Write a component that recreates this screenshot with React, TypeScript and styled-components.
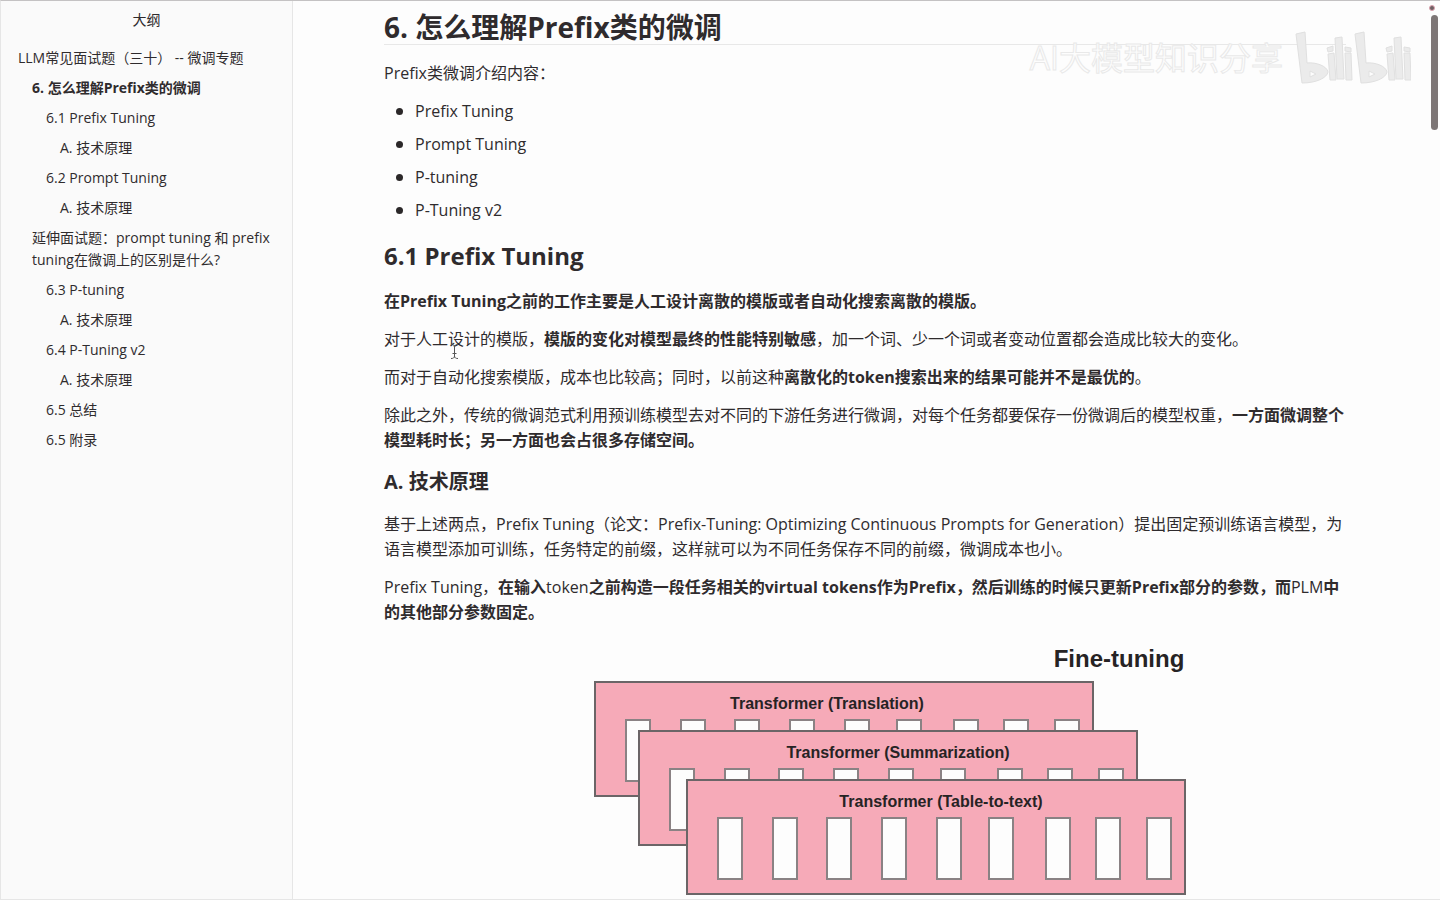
import React from "react";
import styled, { createGlobalStyle } from "styled-components";

const GlobalStyle = createGlobalStyle`
  *, *::before, *::after { box-sizing: border-box; }
  body {
    margin: 0;
    background: #fdfdfd;
    color: #2f2b2d;
    font-family: "Open Sans", "Noto Sans CJK SC", sans-serif;
    font-size: 16px;
    line-height: 25px;
  }
`;

const Window = styled.div`
  position: relative;
  display: flex;
  height: 100vh;
  overflow: hidden;
  border-top: 1px solid #c4c2c3;
  border-left: 1px solid #e6e6e6;
  border-bottom: 1px solid #e6e6e6;
`;

const Sidebar = styled.aside`
  flex: 0 0 292px;
  padding: 8px 17px 0 17px;
  background: #fafafa;
  border-right: 1px solid #e6e6e6;
  font-size: 14px;
  line-height: 22px;
`;

const SidebarTitle = styled.div`
  margin-bottom: 12px;
  text-align: center;
`;

const OutlineList = styled.ul`
  margin: 0;
  padding: 0;
  list-style: none;
`;

const OutlineItem = styled.li<{ $level: number }>`
  padding: 4px 0 4px ${(p) => p.$level * 14}px;
`;

const OutlineLink = styled.a<{ $active?: boolean }>`
  display: block;
  color: inherit;
  text-decoration: none;
  font-weight: ${(p) => (p.$active ? 700 : 400)};
`;

const Article = styled.main`
  flex: 1;
  min-width: 0;
  padding: 10px 94px 0 91px;
`;

const Title = styled.h2`
  margin: 0 0 16px;
  border-bottom: 1px solid #e8e8e8;
  font-size: 28px;
  line-height: 33px;
`;

const Section = styled.h3`
  margin: 16px 0;
  font-size: 24px;
  line-height: 34px;
`;

const Subsection = styled.h4`
  margin: 15px 0 16px;
  font-size: 20px;
  line-height: 28px;
`;

const Paragraph = styled.p`
  margin: 0 0 13px;
`;

const Bullets = styled.ul`
  display: flex;
  flex-direction: column;
  gap: 8px;
  margin: 0;
  padding: 0 0 0 12px;
  list-style: none;
`;

const Bullet = styled.li`
  display: flex;
  align-items: center;
  gap: 12px;

  &::before {
    content: "";
    width: 7px;
    height: 7px;
    border-radius: 50%;
    background: #2b2829;
  }
`;

const Figure = styled.figure`
  margin: 15px 0 0;

  svg {
    display: block;
    width: 100%;
    height: auto;
  }
`;

const Watermark = styled.div`
  position: absolute;
  top: 25px;
  right: 29px;
  display: flex;
  align-items: center;
  gap: 12px;
  color: #fdfdfd;
  font-size: 32px;
  line-height: 64px;
  -webkit-text-stroke: 1px #e9e9e9;
  pointer-events: none;
`;

const ScrollThumb = styled.div`
  position: absolute;
  top: 14px;
  right: 2px;
  width: 7px;
  height: 115px;
  border-radius: 4px;
  background: #7d7676;
`;

const RecordDot = styled.div`
  position: absolute;
  top: 4px;
  right: 5px;
  width: 6px;
  height: 6px;
  border: 1px solid #dba3ae;
  border-radius: 50%;
  background: #6d5f63;
`;

const TextCursor = styled.svg`
  position: absolute;
  top: 342px;
  left: 448px;
`;

const outline = [
  { level: 0, text: "LLM常见面试题（三十） -- 微调专题" },
  { level: 1, text: "6. 怎么理解Prefix类的微调", active: true },
  { level: 2, text: "6.1 Prefix Tuning" },
  { level: 3, text: "A. 技术原理" },
  { level: 2, text: "6.2 Prompt Tuning" },
  { level: 3, text: "A. 技术原理" },
  { level: 1, text: "延伸面试题：prompt tuning 和 prefix tuning在微调上的区别是什么?" },
  { level: 2, text: "6.3 P-tuning" },
  { level: 3, text: "A. 技术原理" },
  { level: 2, text: "6.4 P-Tuning v2" },
  { level: 3, text: "A. 技术原理" },
  { level: 2, text: "6.5 总结" },
  { level: 2, text: "6.5 附录" },
];

const methods = ["Prefix Tuning", "Prompt Tuning", "P-tuning", "P-Tuning v2"];

const cells = [31, 86, 140, 195, 250, 302, 359, 409, 460];

const models = [
  { x: 211, y: 42, label: "Transformer (Translation)", labelX: 443 },
  { x: 255, y: 91, label: "Transformer (Summarization)", labelX: 514 },
  { x: 303, y: 140, label: "Transformer (Table-to-text)", labelX: 557 },
];

function FineTuningDiagram() {
  return (
    <svg viewBox="0 0 962 260" role="img" aria-label="Fine-tuning">
      <g fontFamily='"Liberation Sans", Arial, sans-serif' fontWeight="700" fill="#262324">
        <text x="735" y="27" fontSize="24" textAnchor="middle">
          Fine-tuning
        </text>
        {models.map((m) => (
          <g key={m.label}>
            <rect x={m.x} y={m.y} width="498" height="114" fill="#f6aab8" stroke="#6b6567" strokeWidth="2" />
            <text x={m.labelX} y={m.y + 27} fontSize="16" textAnchor="middle">
              {m.label}
            </text>
            {cells.map((c) => (
              <rect
                key={c}
                x={m.x + c}
                y={m.y + 38}
                width="24"
                height="61"
                fill="#fdfdfd"
                stroke="#8a8284"
                strokeWidth="2"
              />
            ))}
          </g>
        ))}
      </g>
    </svg>
  );
}

function BilibiliLogo() {
  return (
    <svg width="116" height="54" viewBox="0 0 116 54" fill="#ebebeb" stroke="#e0e0e0" strokeWidth="1">
      {[0, 59].map((x) => (
        <g key={x} transform={`translate(${x} 0)`}>
          <path
            fillRule="evenodd"
            d="M1 3 L10 1 L12 32 C21 31 32 35 33 41 C32 47 21 52 7 52 Z M15 40 L15 46 L21 43 Z"
          />
          <path d="M33 23 L39 22 L41 49 L35 49 Z" />
          <path d="M40 7 L47 6 L49 48 L42 48 Z" />
          <path d="M50 22 L56 22 L57 49 L51 49 Z" />
          <path d="M32 17 L38 15 L38 20 L33 21 Z" />
          <path d="M50 16 L56 17 L56 21 L50 20 Z" />
        </g>
      ))}
    </svg>
  );
}

export default function App() {
  return (
    <>
      <GlobalStyle />
      <Window>
        <Sidebar>
          <SidebarTitle>大纲</SidebarTitle>
          <nav>
            <OutlineList>
              {outline.map((item, i) => (
                <OutlineItem key={i} $level={item.level}>
                  <OutlineLink href="#" $active={item.active}>
                    {item.text}
                  </OutlineLink>
                </OutlineItem>
              ))}
            </OutlineList>
          </nav>
        </Sidebar>
        <Article>
          <Title>6. 怎么理解Prefix类的微调</Title>
          <Paragraph>Prefix类微调介绍内容：</Paragraph>
          <Bullets>
            {methods.map((m) => (
              <Bullet key={m}>{m}</Bullet>
            ))}
          </Bullets>
          <Section>6.1 Prefix Tuning</Section>
          <Paragraph>
            <strong>在Prefix Tuning之前的工作主要是人工设计离散的模版或者自动化搜索离散的模版。</strong>
          </Paragraph>
          <Paragraph>
            对于人工设计的模版，<strong>模版的变化对模型最终的性能特别敏感</strong>
            ，加一个词、少一个词或者变动位置都会造成比较大的变化。
          </Paragraph>
          <Paragraph>
            而对于自动化搜索模版，成本也比较高；同时，以前这种
            <strong>离散化的token搜索出来的结果可能并不是最优的</strong>。
          </Paragraph>
          <Paragraph>
            除此之外，传统的微调范式利用预训练模型去对不同的下游任务进行微调，对每个任务都要保存一份微调后的模型权重，
            <strong>一方面微调整个模型耗时长；另一方面也会占很多存储空间。</strong>
          </Paragraph>
          <Subsection>A. 技术原理</Subsection>
          <Paragraph>
            基于上述两点，Prefix Tuning（论文：Prefix-Tuning: Optimizing Continuous Prompts for
            Generation）提出固定预训练语言模型，为语言模型添加可训练，任务特定的前缀，这样就可以为不同任务保存不同的前缀，微调成本也小。
          </Paragraph>
          <Paragraph>
            Prefix Tuning，<strong>在输入</strong>token
            <strong>之前构造一段任务相关的virtual tokens作为Prefix，然后训练的时候只更新Prefix部分的参数，而</strong>
            PLM<strong>中的其他部分参数固定。</strong>
          </Paragraph>
          <Figure>
            <FineTuningDiagram />
          </Figure>
        </Article>
        <Watermark>
          <span>AI大模型知识分享</span>
          <BilibiliLogo />
        </Watermark>
        <TextCursor width="11" height="17" viewBox="0 0 11 17" fill="none" stroke="#555" aria-hidden="true">
          <path d="M2 1.5 C4 1.5 5.5 2 5.5 4 C5.5 2 7 1.5 9 1.5 M5.5 3 V14 M3.5 10.5 H7.5 M2 15.5 C4 15.5 5.5 15 5.5 13 C5.5 15 7 15.5 9 15.5" />
        </TextCursor>
        <RecordDot />
        <ScrollThumb />
      </Window>
    </>
  );
}
